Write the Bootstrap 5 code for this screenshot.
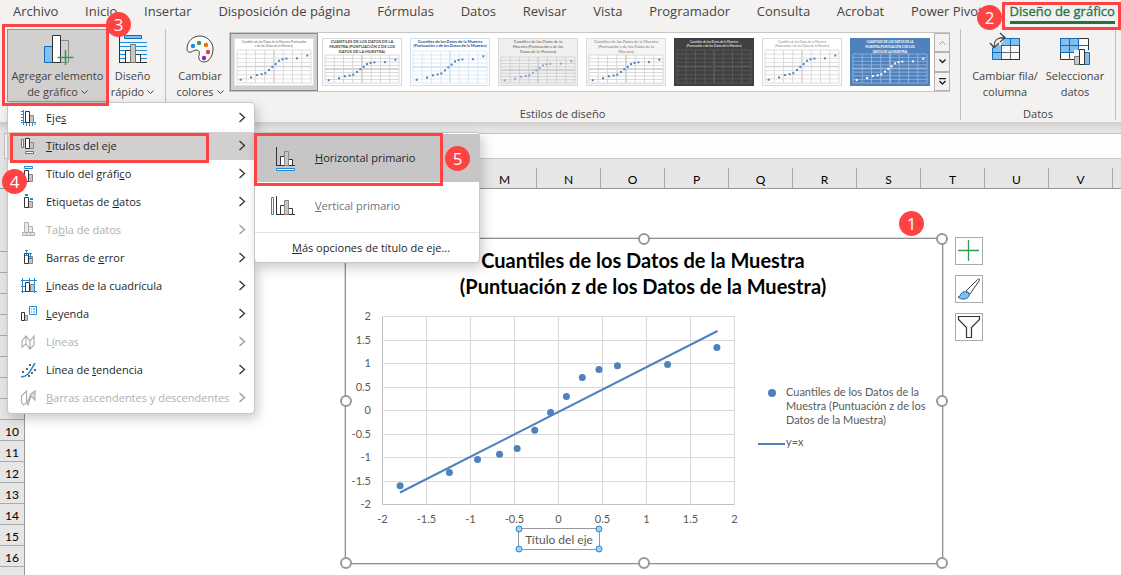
<!DOCTYPE html>
<html lang="es">
<head>
<meta charset="utf-8">
<meta name="viewport" content="width=device-width, initial-scale=1">
<title>Libro de Excel</title>
<link href="https://cdn.jsdelivr.net/npm/bootstrap@5.3.0/dist/css/bootstrap.min.css" rel="stylesheet">
<style>
:root{--ui:"Open Sans","Noto Sans",sans-serif;--sheet:Lato,"Open Sans",sans-serif;--mark:#ff4343}
body{font-family:var(--ui);font-size:11px;line-height:16px;color:#262626;background:#fff}
.app{min-height:100vh;overflow:hidden}
button{font-family:inherit}
svg{display:block;flex:none}
.ribbon{background:#f3f2f1;color:#444;height:122px}
.tabs{height:24px;padding:0 6px 0 13px;font-size:13px}
.tabs a{color:#444;text-decoration:none;white-space:nowrap;line-height:22px}
.tabs a.current{color:#217346;-webkit-text-stroke:.3px #217346;border-bottom:3px solid #217346;line-height:22px;height:24px}
.big{border:1px solid transparent;background:none;color:#444;padding:0;height:73px;line-height:16px;white-space:nowrap}
.big svg{margin:0 auto 3px}
.big .caret{display:inline-block;margin:0 0 0 3px;vertical-align:1px}
.big.open{background:#d2d0ce;border-color:#979593}
.rule{width:1px;background:#c1bfbd;align-self:stretch}
.gallery{background:#fff;border:1px solid #c8c6c4;height:60px;padding:0}
.thumb{width:88px;height:58px;padding:4px 3px;border:1px solid transparent;background:none}
.thumb.on{background:#d2d0ce;border:1px solid #8a8886}
.spin{width:15px}
.spin button{flex:1;border:1px solid #b5b3b1;background:#f3f2f1;padding:0;margin:0 -1px 0 0}
.glabel{height:18px;line-height:18px}
.strip{height:11px;background:linear-gradient(#cfcdcb,#e6e6e6 8px)}
.fbar{height:26px;background:#e6e6e6;padding-left:4px}
.fbar input{border:1px solid #c6c6c6;background:#fdfdfd;font-size:12px;padding:0 6px;min-width:0;outline:0}
.colhead{background:#e6e6e6;height:30px;padding-top:9px;border-bottom:1px solid #999;font:12px/23px var(--sheet);color:#000;padding-left:25px}
.colhead div{width:64px;flex:none;text-align:center;border-right:1px solid #aaa}
.rowhead{width:25px;background:#e6e6e6;border-right:1px solid #999;font:12px/23px var(--sheet);color:#000;text-align:center}
.rowhead div{height:21px;border-bottom:1px solid #aaa}
.rowhead div:first-child{height:63px}
.cells{height:386px}
.chart{left:345px;top:238px;width:598px;height:326px;background:#fff;border:1px solid #8f8f8f;box-shadow:0 0 0 1px #dcdcdc;font-family:var(--sheet);color:#595959}
.chart h1{font:700 20px/26px var(--sheet);color:#000;margin:8px 2px 0 0;text-align:center}
.knob{width:12px;height:12px;border:2px solid #999;border-radius:50%;background:#fff;transform:translate(-50%,-50%)}
.axis{left:172px;top:289px;width:82px;height:22px;border:1px solid #999;font:12px/21px var(--sheet);text-align:center;padding:0}
.axis i{width:7px;height:7px;border:1px solid #1f8bd6;border-radius:50%;background:#a6d1f0;transform:translate(-50%,-50%)}
.legend{left:411px;top:146px;width:180px;font-size:11px;line-height:14px}
.side{left:955px;top:237px}
.side button{width:28px;height:28px;border:1px solid #aaa;background:#fff;padding:0}
.menu{background:#fff;border:1px solid #c6c6c6;border-radius:4px;box-shadow:3px 5px 12px rgba(0,0,0,.2);padding:1px 0}
.menu button{display:flex;align-items:center;width:100%;border:0;background:none;color:#262626;text-align:left;white-space:nowrap}
.main{left:7px;top:102px;width:248px;height:312px}
.main button{height:28px;padding:0 8px 0 12px}
.main button svg:first-child{margin-right:9px}
.main button:disabled{color:#b1afad}
.main .hot{background:#d2d0ce}
.chev{margin:0 0 2px auto}
.sub{left:254px;top:132px;width:226px;height:131px}
.sub button{height:48px;padding:0 0 0 15px}
.sub button svg{margin-right:18px}
.sub .hot{background:#c6c6c6}
.sub .more{height:29px;padding-left:37px}
.frame{border:3px solid var(--mark);pointer-events:none}
.dot{width:25px;height:25px;border-radius:50%;background:var(--mark);color:#fff;font:17px/25px "Open Sans",sans-serif;text-align:center}
</style>
</head>
<body>
<div class="app position-relative d-flex flex-column">
<header class="ribbon">
  <nav class="tabs d-flex justify-content-between">
    <a href="#">Archivo</a><a href="#">Inicio</a><a href="#">Insertar</a><a href="#">Disposición de página</a><a href="#">Fórmulas</a><a href="#">Datos</a><a href="#">Revisar</a><a href="#">Vista</a><a href="#">Programador</a><a href="#">Consulta</a><a href="#">Acrobat</a><a href="#">Power Pivot</a><a href="#" class="current">Diseño de gráfico</a>
  </nav>
  <div class="d-flex" style="padding:5px 5px 0 7px">
    <button class="big open" style="width:101px">
      <svg width="32" height="34" viewBox="0 0 32 34"><path d="M18.500 9.500h8v22h-8z" fill="#d2d0ce" stroke="#888"/><path d="M2.500 15.500h8v16h-8z" fill="#83beec" stroke="#0f6cbd"/><path d="M10.500 4.500h8v27h-8z" fill="#fff" stroke="#333"/><path d="M23.500 19v15M15.500 26.500h16" stroke="#2f9e4f" stroke-width="1.500"/></svg>
      Agregar elemento<br>de gráfico<svg class="caret" width="7" height="5"><path d="M.5.5l3 3 3-3" fill="none" stroke="#444"/></svg></button>
    <button class="big" style="width:49px">
      <svg width="30" height="34" viewBox="0 0 30 34"><path d="M6.500 4.500h17v3h-17z" fill="#83beec" stroke="#0f6cbd"/><path d="M2 11.500h27M2 15.500h27M2 19.500h27M2 23.500h27M2 27.500h27" stroke="#1f8bd6"/><path d="M1.500 5v27M1 31.500h28" stroke="#333"/><path d="M7.500 19.500h5v12h-5zM17.500 23.500h5v8h-5z" fill="#fff" stroke="#333"/><path d="M12.500 13.500h5v18h-5z" fill="#c8c6c4" stroke="#777"/></svg>
      Diseño<br>rápido<svg class="caret" width="7" height="5"><path d="M.5.5l3 3 3-3" fill="none" stroke="#444"/></svg></button>
    <div class="rule mx-2"></div>
    <button class="big" style="width:52px">
      <svg width="30" height="34" viewBox="0 0 30 34"><path d="M2 18C2 10 8 5 15 5s13 6 13 13c0 7-4 13-9 13-4 0-6-3-5-7 1-3 0-5-3-5-3 0-4 3-7 2-1 0-2-1-2-3z" fill="#fafafa" stroke="#444"/><circle cx="8" cy="15" r="2.200" fill="#1f8bd6"/><circle cx="14" cy="12" r="2.200" fill="#2f9e4f"/><circle cx="21" cy="14" r="2.200" fill="#e8730c"/><circle cx="23" cy="21" r="2.200" fill="#f03a3a"/><circle cx="19" cy="27" r="2.200" fill="#8e2fa8"/></svg>
      Cambiar<br>colores<svg class="caret" width="7" height="5"><path d="M.5.5l3 3 3-3" fill="none" stroke="#444"/></svg></button>
    <div class="me-auto" style="padding:3px 0 0 3px">
      <div class="gallery d-flex"><div id="thumbs" class="d-flex"></div>
        <div class="spin d-flex flex-column">
          <button class="d-flex align-items-center justify-content-center" aria-label="Subir"><svg width="7" height="4"><path d="M.5 3.500l3-3 3 3" fill="none" stroke="#999"/></svg></button>
          <button class="d-flex align-items-center justify-content-center" aria-label="Bajar"><svg width="7" height="5"><path d="M.5.5l3 3 3-3" fill="none" stroke="#222" stroke-width="1.400"/></svg></button>
          <button class="d-flex align-items-center justify-content-center" aria-label="Más"><svg width="7" height="7"><path d="M0 .5h7M.5 3l3 3 3-3" fill="none" stroke="#222" stroke-width="1.400"/></svg></button>
        </div>
      </div>
      <div class="glabel text-center" style="padding:13px 54px 0 0">Estilos de diseño</div>
    </div>
    <div class="rule"></div>
    <div>
      <div class="d-flex justify-content-center">
        <button class="big" style="width:74px;margin-left:7px">
          <svg width="32" height="34" viewBox="0 0 32 34"><path d="M3.500 7.500h27v21h-27z" fill="#fafafa"/><path d="M12 7h19v7H12zM3 14h9v15H3z" fill="#83beec"/><path d="M12.500 14v15M21.500 7v22M3 21.500h28M12 14.500h18" stroke="#666"/><path d="M3.500 17v11.500h27V7.500H15M12.500 14v14M3 21.500h9M21.500 7v7M12 14.500h18" fill="none" stroke="#0f6cbd"/><path d="M12 28.500h18.500V14" fill="none" stroke="#333"/><path d="M3 2h11v9L5 16H0V7z" fill="#f3f2f1"/><path d="M5 16C5 9 8 6.500 15 6.500M11 2l5 4.500-5 4.500M1 12l4 4.500 5-4.500" fill="none" stroke="#444" stroke-width="1.300"/></svg>
          Cambiar fila/<br>columna</button>
        <button class="big" style="width:66px;margin-right:7px">
          <svg width="32" height="34" viewBox="0 0 32 34"><path d="M1.500 7.500h28v21h-28z" fill="#fafafa" stroke="#333"/><path d="M1.500 7.500h18v14h-18z" fill="#83beec"/><path d="M19 14.500h10M10.500 21v8M1 21.500h18" stroke="#555"/><path d="M1.500 7.500h18v14h-18zM10.500 7v14M1 14.500h18" fill="none" stroke="#0f6cbd"/><path d="M15 19h17v15H15z" fill="#f3f2f1"/><path d="M15.500 25.500h5v8h-5z" fill="#c8c6c4" stroke="#777"/><path d="M25.500 21.500h5v12h-5z" fill="#83beec" stroke="#0f6cbd"/><path d="M20.500 18.500h5v15h-5z" fill="#fff" stroke="#333"/></svg>
          Seleccionar<br>datos</button>
      </div>
      <div class="glabel text-center" style="padding-top:3px">Datos</div>
    </div>
    <div class="rule"></div>
  </div>
</header>
<div class="strip"></div>
<div class="fbar d-flex"><input style="width:120px" aria-label="Cuadro de nombres"><input class="flex-grow-1 border-end-0 ms-1" aria-label="Barra de fórmulas"></div>
<div class="colhead d-flex"><div></div><div></div><div></div><div></div><div></div><div></div><div></div><div>M</div><div>N</div><div>O</div><div>P</div><div>Q</div><div>R</div><div>S</div><div>T</div><div>U</div><div>V</div><div></div></div>
<div class="cells d-flex overflow-hidden">
  <div class="rowhead"><div></div><div></div><div></div><div></div><div></div><div></div><div></div><div></div><div></div><div>10</div><div>11</div><div>12</div><div>13</div><div>14</div><div>15</div><div>16</div><div>17</div></div>
</div>

<section class="chart position-absolute">
  <h1>Cuantiles de los Datos de la Muestra<br>(Puntuación z de los Datos de la Muestra)</h1>
  <svg id="plot" class="position-absolute top-0 start-0" width="410" height="300" font-size="11" fill="#595959"></svg>
  <div class="legend position-absolute">
    <div class="d-flex"><svg width="29" height="14"><circle cx="15" cy="8" r="4" fill="#4f81bd"/></svg><span>Cuantiles de los Datos de la<br>Muestra (Puntuación z de los<br>Datos de la Muestra)</span></div>
    <div class="d-flex mt-2"><svg width="29" height="14"><path d="M1 9h27" stroke="#4f81bd" stroke-width="2"/></svg><span>y=x</span></div>
  </div>
  <div class="axis position-absolute">Título del eje<i class="position-absolute top-0 start-0"></i><i class="position-absolute top-0 start-100"></i><i class="position-absolute top-100 start-0"></i><i class="position-absolute top-100 start-100"></i></div>
  <span class="knob position-absolute top-0 start-0"></span><span class="knob position-absolute top-0 start-50"></span><span class="knob position-absolute top-0 start-100"></span>
  <span class="knob position-absolute top-50 start-0"></span><span class="knob position-absolute top-50 start-100"></span>
  <span class="knob position-absolute top-100 start-0"></span><span class="knob position-absolute top-100 start-50"></span><span class="knob position-absolute top-100 start-100"></span>
</section>
<div class="side position-absolute d-flex flex-column" style="gap:10px">
  <button aria-label="Elementos de gráfico"><svg width="26" height="26"><path d="M12.500 2v21M2 12.500h21" stroke="#2f9e4f" stroke-width="1.300"/></svg></button>
  <button aria-label="Estilos de gráfico"><svg width="26" height="26"><path d="M10 15L21 4c2-2 3-1 2 1l-9 13z" fill="#fafafa" stroke="#444"/><path d="M2 21c3 0 2-4 5-5 4-1 7 1 6 4-2 4-8 4-11 1z" fill="#83beec" stroke="#0f6cbd"/></svg></button>
  <button aria-label="Filtros de gráfico"><svg width="26" height="26"><path d="M2.500 2.500h21v3l-8 8v10h-5v-10l-8-8z" fill="#fafafa" stroke="#333" stroke-width="1.200"/></svg></button>
</div>

<div class="menu main position-absolute" id="m">
  <button><svg width="17" height="16"><path d="M3.500 0v15M1 1.500h2M1 4.500h2M1 7.500h2M1 10.500h2M1 12.500h15M6.500 13v3M9.500 13v3M12.500 13v3M15 13v2" stroke="#1f8bd6"/><path d="M9.500 5.500h4v7h-4z" fill="#c8c6c4" stroke="#888"/><path d="M5.500 1.500h4v11h-4z" fill="#fff" stroke="#333"/></svg><span>Eje<u>s</u></span></button>
  <button class="hot"><svg width="17" height="16"><path d="M1.500 1.500h2v8h-2zM5.500 13.500h8v2h-8z" fill="#fff" stroke="#1f8bd6"/><path d="M9.500 4.500h4v6h-4z" fill="#c8c6c4" stroke="#888"/><path d="M5.500.5h4v10h-4z" fill="#fff" stroke="#333"/></svg><span><u>T</u>ítulos del eje</span></button>
  <button><svg width="17" height="16"><path d="M4.500.5h8v2h-8z" fill="#fff" stroke="#1f8bd6"/><path d="M8.500 8.500h4v7h-4z" fill="#c8c6c4" stroke="#888"/><path d="M4.500 4.500h4v11h-4z" fill="#fff" stroke="#333"/></svg><span>Título del gráfi<u>c</u>o</span></button>
  <button><svg width="17" height="16"><path d="M5 0h3v2H5zM10 4h3v2h-3z" fill="#1f8bd6"/><path d="M8.500 7.500h4v6h-4z" fill="#c8c6c4" stroke="#888"/><path d="M4.500 3.500h4v10h-4z" fill="#fff" stroke="#333"/></svg><span>Etiquetas de <u>d</u>atos</span></button>
  <button disabled><svg width="17" height="16" fill="#e8e8e8" stroke="#b1afad"><path d="M8.500 4.500h4v6h-4zM4.500.5h4v10h-4zM2.500 10.500h12v3h-12zM6.500 10v3M10.500 10v3"/></svg><span>Ta<u>b</u>la de datos</span></button>
  <button><svg width="17" height="16"><path d="M8.500 6.500h4v7h-4z" fill="#c8c6c4" stroke="#888"/><path d="M4.500 3.500h4v10h-4z" fill="#fff" stroke="#333"/><path d="M6.500 0v6M5 .5h3M5 5.500h3M10.500 3v6M9 3.500h3M9 8.500h3" stroke="#1f8bd6"/></svg><span>Barras de <u>e</u>rror</span></button>
  <button><svg width="17" height="16"><path d="M10.500 6.500h4v7h-4z" fill="#c8c6c4" stroke="#888"/><path d="M1 2.500h16M1 13.500h16M2.500 0v15M14.500 0v15M1 8.500h4M9.500 0v4" stroke="#1f8bd6"/><path d="M5.500 4.500h4v9h-4z" fill="#fff" stroke="#333"/></svg><span><u>L</u>íneas de la cuadrícula</span></button>
  <button><svg width="17" height="16"><path d="M9.500.5h7v8h-7zM11 3h1M13 3h2M11 6h1M13 6h2" fill="#fff" stroke="#1f8bd6"/><path d="M4.500 9.500h3v5h-3z" fill="#c8c6c4" stroke="#888"/><path d="M1.500 6.500h3v8h-3z" fill="#fff" stroke="#333"/></svg><span><u>L</u>eyenda</span></button>
  <button disabled><svg width="17" height="16" fill="none" stroke="#b1afad" stroke-width="1.200"><path d="M2 13V7l4-5 4 5 4-5v9l-4 4-4-5zM6 2v8M10 7v8"/></svg><span>L<u>í</u>neas</span></button>
  <button><svg width="17" height="16"><path d="M1 15C9 14 10 9 15 1" fill="none" stroke="#1f8bd6" stroke-width="1.500"/><path d="M2 9h2v2H2zM6 6h2v2H6zM9 2h2v2H9zM11 10h2v2h-2zM14 7h2v2h-2zM8 13h2v2H8z" fill="#666"/></svg><span>Línea de <u>t</u>endencia</span></button>
  <button disabled><svg width="17" height="16" fill="#fff" stroke="#b1afad" stroke-width="1.200"><path d="M1.500 12V6l5-5v12l-3 2z"/><path d="M7 13l4-9 4-3v9l-4-4-3 9z" fill="#ddd"/></svg><span><u>B</u>arras ascendentes y descendentes</span></button>
</div>
<div class="menu sub position-absolute">
  <button class="hot"><svg width="27" height="28"><path d="M6.500 3v19M6 21.500h19" stroke="#333"/><path d="M10.500 12.500h4v9h-4zM18.500 15.500h4v6h-4z" fill="#fff" stroke="#333"/><path d="M14.500 7.500h4v14h-4z" fill="#c8c6c4" stroke="#888"/><path d="M6.500 24.500h18v2h-18z" fill="#fff" stroke="#1f8bd6"/></svg><span><u>H</u>orizontal primario</span></button>
  <button class="text-secondary"><svg width="27" height="28"><path d="M6.500 4v19M6 22.500h19" stroke="#333"/><path d="M10.500 13.500h4v9h-4zM18.500 16.500h4v6h-4z" fill="#fff" stroke="#333"/><path d="M14.500 8.500h4v14h-4z" fill="#c8c6c4" stroke="#888"/><path d="M1.500 5.500h2v17h-2z" fill="#fff" stroke="#1f8bd6"/></svg><span><u>V</u>ertical primario</span></button>
  <div class="border-top" style="margin-top:2px"></div>
  <button class="more"><span><u>M</u>ás opciones de título de eje...</span></button>
</div>

<div class="frame position-absolute" style="left:2px;top:24px;width:107px;height:82px"></div>
<div class="frame position-absolute end-0" style="top:2px;width:119px;height:28px"></div>
<div class="frame position-absolute" style="left:10px;top:133px;width:199px;height:30px"></div>
<div class="frame position-absolute" style="left:254px;top:133px;width:189px;height:53px"></div>
<div class="dot position-absolute" style="left:899px;top:211px">1</div>
<div class="dot position-absolute" style="right:119px;top:5px">2</div>
<div class="dot position-absolute" style="left:106px;top:12px">3</div>
<div class="dot position-absolute" style="left:2px;top:169px">4</div>
<div class="dot position-absolute" style="left:445px;top:146px">5</div>
</div>
<script src="https://cdn.jsdelivr.net/npm/bootstrap@5.3.0/dist/js/bootstrap.bundle.min.js"></script>
<script>
// submenu arrows
document.querySelectorAll('#m button').forEach(b => b.insertAdjacentHTML('beforeend',
  '<svg class="chev" width="8" height="11"><path d="M1.500 1l5 4.500-5 4.500" fill="none" stroke="' + (b.disabled ? '#999' : '#333') + '" stroke-width="1.300"/></svg>'));

// data series: theoretical quantile, sample quantile
const pts = [[-1.8,-1.6],[-1.24,-1.32],[-.92,-1.04],[-.67,-.93],[-.47,-.81],[-.27,-.42],[-.09,-.04],[.09,.3],[.27,.7],[.46,.87],[.67,.95],[1.24,.98],[1.8,1.34]];
const gx = v => 212.5 + v * 88, gy = v => 171.5 - v * 47;
let s = '';
for (let v = -2; v <= 2; v += .5) {
  const y = Math.floor(gy(v)) + .5, x = gx(v);
  s += `<path d="M${x} 77.500V265.500M36.500 ${y}H388.500" stroke="${v === -2 ? '#bfbfbf' : '#d9d9d9'}"/>`;
  s += `<text x="25" y="${y + 3}" text-anchor="end">${v}</text><text x="${x}" y="284" text-anchor="middle">${v}</text>`;
}
s += `<path d="M54 253.500L371.500 92" stroke="#4f81bd" stroke-width="2"/>`;
pts.forEach(p => s += `<circle cx="${gx(p[0])}" cy="${gy(p[1])}" r="3.500" fill="#4f81bd"/>`);
document.getElementById('plot').innerHTML = s;

// gallery styles: background, border, grid, title, points, title lines, plot top, title size and weight
const C1 = ['Cuantiles de los Datos de la Muestra (Puntuación', 'z de los Datos de la Muestra)'];
const C2 = ['CUANTILES DE LOS DATOS DE LA', 'MUESTRA (PUNTUACIÓN Z DE LOS', 'DATOS DE LA MUESTRA)'];
const C3 = ['Cuantiles de los Datos de la Muestra', '(Puntuación z de los Datos de la Muestra)'];
const C4 = ['Cuantiles de los Datos de la', 'Muestra (Puntuación z de los', 'Datos de la Muestra)'];
const C5 = ['Cuantiles de los Datos de la Muestra', '(Puntuación z de los Datos de la', 'Muestra)'];
const styles = [
  ['#fff','#e0e0e0','#d4d4d4','#666','#4f81bd',C1,12,3,400],
  ['#fff','#d9d9d9','#cfcfcf','#444','#4f81bd',C2,17,4,700],
  ['#fff','#cfe0f2','#d3e3f5','#1f497d','#4f81bd',C3,13,4,700],
  ['#f0f0f0','#d9d9d9','#cdcdcd','#555','#8aa8cf',C4,19,4,400],
  ['#f5f5f5','#dcdcdc','#d0d0d0','#777','#4f81bd',C5,17,4,400],
  ['#404040','#404040','#5e5e5e','#ddd','#4a4a4a',C3,12,3,700],
  ['#fff','#d9d9d9','#d4d4d4','#888','#4f81bd',C3,12,3,400],
  ['#4f81bd','#4f81bd','#9bb9dc','#fff','#fff',C2,16,3,700]
];
document.getElementById('thumbs').innerHTML = styles.map((t, i) => {
  const [bg, bd, gr, tx, pt, lines, top, fs, w] = t, h = 45 - top;
  let g = `<rect x=".5" y=".5" width="79" height="47" fill="${bg}" stroke="${bd}"/>`;
  g += `<rect x="3" y="${top}" width="74" height="${h}" fill="${bg === '#f5f5f5' ? '#fff' : 'none'}"/>`;
  for (let k = 0; k <= 8; k++) g += `<path d="M${3 + k * 9.25} ${top}v${h}M3 ${top + k * h / 8}h74" stroke="${gr}" stroke-width=".8"/>`;
  g += `<path d="M40 ${top}v${h}M3 ${top + h / 2}h74" stroke="${gr}" stroke-width="1.300"/>`;
  pts.forEach(p => g += `<rect x="${39 + p[0] * 18.5}" y="${top + h / 2 - 1 - p[1] * h / 4}" width="2" height="2" fill="${pt}"/>`);
  lines.forEach((l, n) => g += `<text x="40" y="${5 + n * (lines.length > 2 ? 5 : 4)}" font-size="${fs}" font-weight="${w}" fill="${tx}" text-anchor="middle">${l}</text>`);
  return `<button class="thumb${i ? '' : ' on'}" aria-label="Estilo ${i + 1}"><svg width="80" height="48" font-family="Lato">${g}</svg></button>`;
}).join('');
</script>
</body>
</html>
